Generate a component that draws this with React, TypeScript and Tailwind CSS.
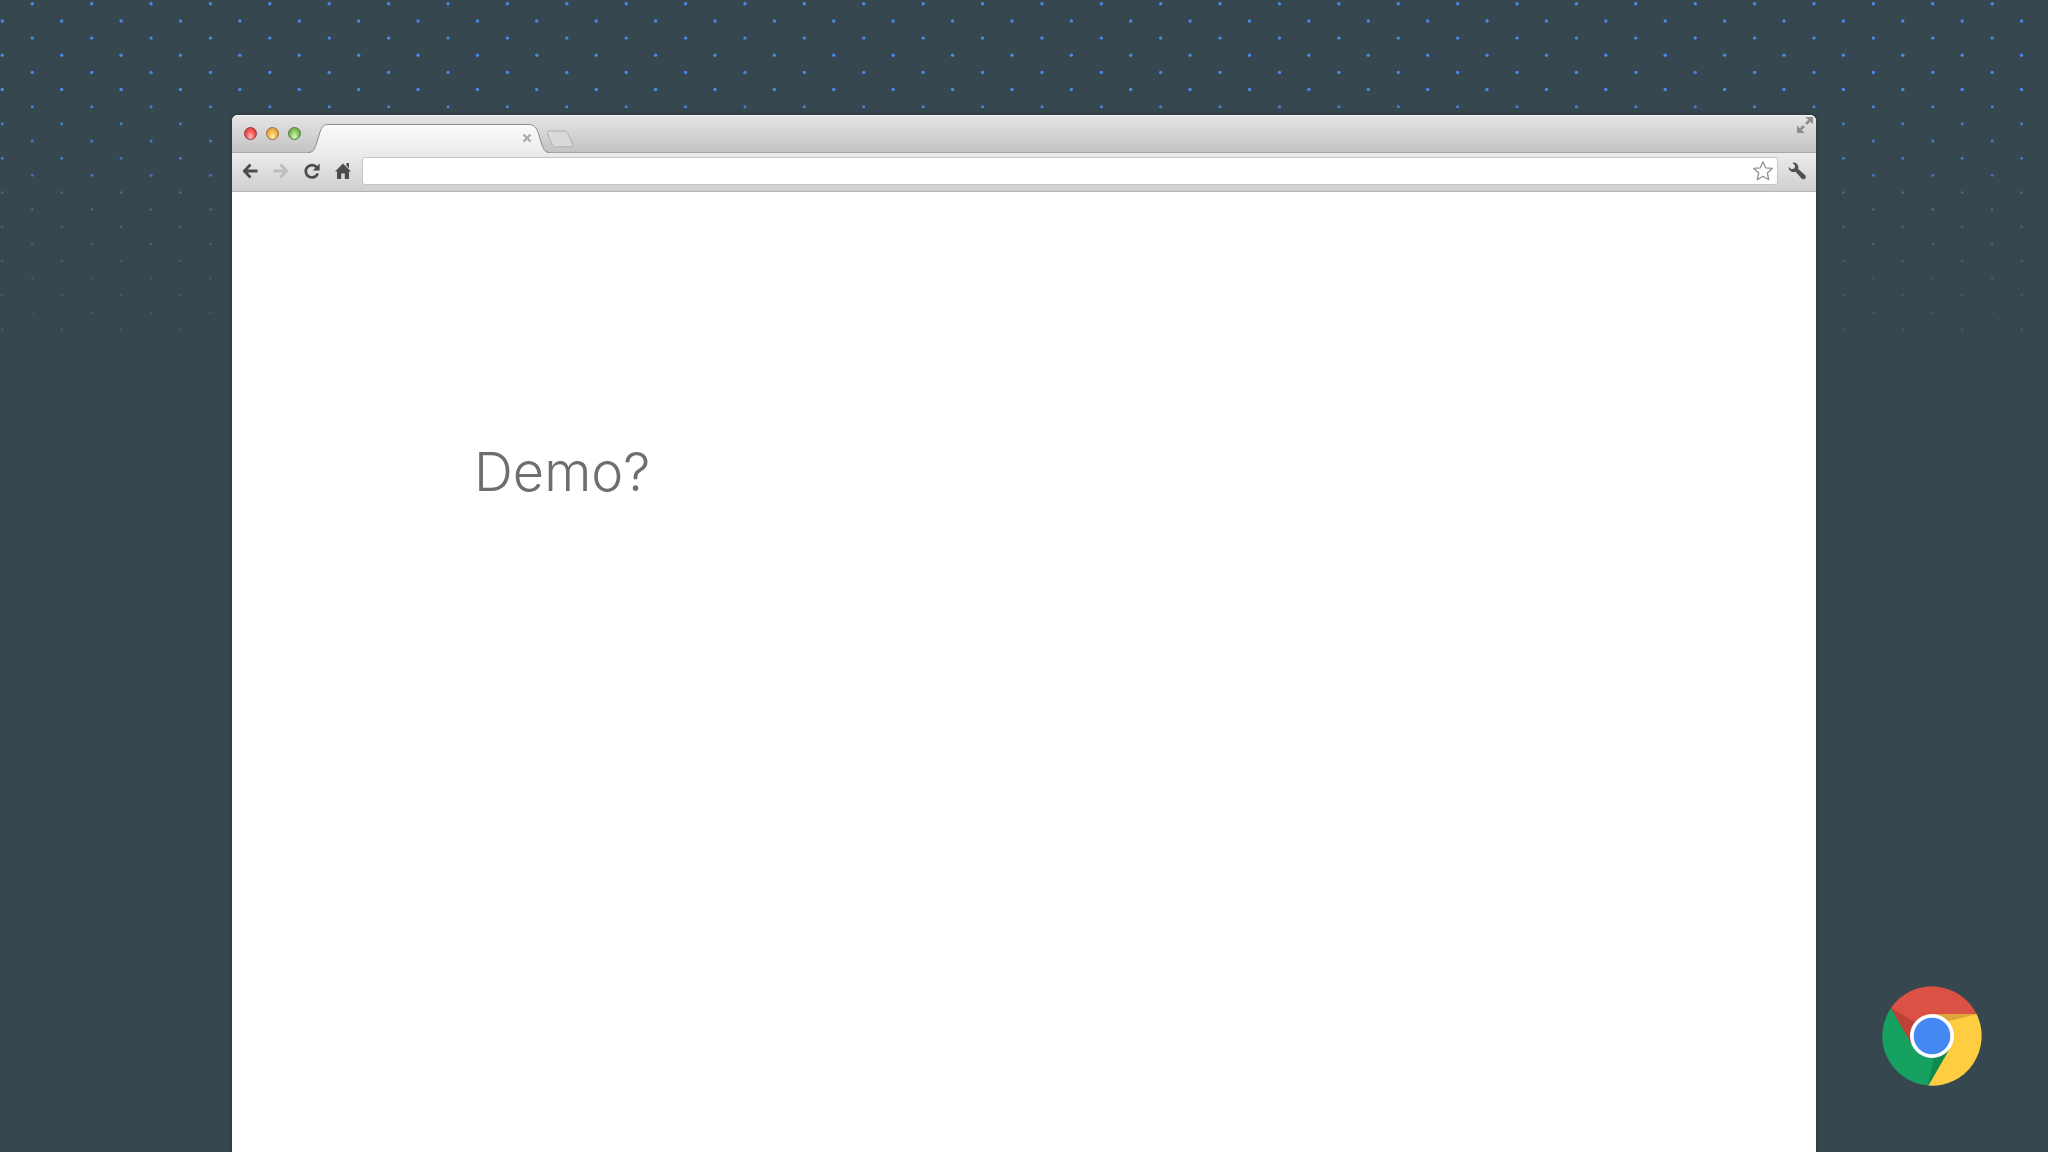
const ROWS = Array.from({ length: 20 }, (_, i) => i);
const COLUMNS = Array.from({ length: 35 }, (_, i) => i);

function rowOpacity(row: number) {
  if (row < 6) return 1;
  if (row < 11) return 1 - (row - 5) * 0.07;
  return Math.max(0.28, 0.6 - (row - 11) * 0.06);
}

function DotPattern() {
  return (
    <svg className="absolute inset-x-0 top-0 w-full" viewBox="0 0 2048 340" aria-hidden="true">
      {ROWS.map((row) => (
        <g key={row} fill={row < 11 ? '#4a88ea' : '#5c84a8'} opacity={rowOpacity(row)}>
          {COLUMNS.map((col) => (
            <circle
              key={col}
              cx={(row % 2 ? 2.3 : 32.3) + col * 59.39}
              cy={3.8 + row * 17.15}
              r={row < 6 ? 1.7 : row < 11 ? 1.5 : 1.3}
            />
          ))}
        </g>
      ))}
    </svg>
  );
}

function TrafficLights() {
  return (
    <div className="flex items-center gap-[9px]">
      <button
        aria-label="Close window"
        className="size-[13px] rounded-full border border-[#8f3438] bg-radial-[at_50%_80%] from-[#ffc4c0] via-[#f9595b] to-[#c52f35]"
      />
      <button
        aria-label="Minimize window"
        className="size-[13px] rounded-full border border-[#94703a] bg-radial-[at_50%_80%] from-[#fff0ac] via-[#f5b64b] to-[#c78a35]"
      />
      <button
        aria-label="Zoom window"
        className="size-[13px] rounded-full border border-[#4d7a39] bg-radial-[at_50%_80%] from-[#dcf7b8] via-[#8ac866] to-[#568c42]"
      />
    </div>
  );
}

function Tab() {
  return (
    <div className="relative h-[29px] w-[242px]">
      <svg className="absolute inset-0" width="242" height="29" viewBox="0 0 242 29" aria-hidden="true">
        <defs>
          <linearGradient id="tab" x1="0" y1="0" x2="0" y2="1">
            <stop offset="0" stopColor="#fbfbfb" />
            <stop offset="1" stopColor="#ebebeb" />
          </linearGradient>
        </defs>
        <path
          d="M0 29V28.500C5 28.500 6 26 8 21L12 8C14 2.500 16 .5 20 .5H221C225 .5 228 3 230 8L234 21C236 26 237 28.500 242 28.500V29Z"
          fill="url(#tab)"
        />
        <path
          d="M0 28.500C5 28.500 6 26 8 21L12 8C14 2.500 16 .5 20 .5H221C225 .5 228 3 230 8L234 21C236 26 237 28.500 242 28.500"
          fill="none"
          stroke="#8c8c8c"
        />
      </svg>
      <button aria-label="Close tab" className="absolute top-[9px] right-[18px] size-[10px]">
        <svg viewBox="0 0 10 10" stroke="#ababab" strokeWidth="2.400" aria-hidden="true">
          <path d="M1.500 1.500l7 7M8.500 1.500l-7 7" />
        </svg>
      </button>
    </div>
  );
}

function NewTabButton() {
  return (
    <button aria-label="New tab" className="-ml-1 mb-[5px] h-[18px] w-7">
      <svg viewBox="0 0 28 18" aria-hidden="true">
        <path
          d="M3 1H18C20 1 21.500 2 22.300 4L26.500 14.500C27 16 26.500 16.800 25 16.800H10C8 16.800 6.800 16 6 14L1.500 3.500C1 2 1.500 1 3 1Z"
          fill="#dadada"
          stroke="#adadad"
        />
      </svg>
    </button>
  );
}

function TitleBar() {
  return (
    <div className="flex h-[38px] items-end justify-between rounded-t-md border-b border-[#a6a6a6] bg-linear-to-b from-[#e6e6e6] to-[#c3c3c3] pl-3 shadow-[inset_0_1px_0_#f2f2f2]">
      <div className="-mb-px flex items-end">
        <div className="mr-[7px] flex h-[38px] items-center pb-0.5">
          <TrafficLights />
        </div>
        <Tab />
        <NewTabButton />
      </div>
      <button aria-label="Full screen" className="mt-[2px] mr-[3px] size-4 self-start">
        <svg viewBox="0 0 16 16" fill="#8e8e8e" stroke="#8e8e8e" aria-hidden="true">
          <path d="M8.500 0H16V7.500Z" stroke="none" />
          <path d="M0 8.500V16H7.500Z" stroke="none" />
          <path d="M13.500 2.500L9 7M2.500 13.500L7 9" strokeWidth="2.800" />
        </svg>
      </button>
    </div>
  );
}

function Toolbar() {
  return (
    <div className="flex h-[39px] items-center border-b border-[#b4b4b4] bg-linear-to-b from-[#ececec] to-[#cfcfcf] px-[10px] pb-0.5">
      <div className="flex gap-[15px]">
        <button aria-label="Back" className="size-4">
          <svg viewBox="0 0 16 16" fill="none" stroke="#4c4c4c" strokeWidth="2.800" aria-hidden="true">
            <path d="M8.500 1.500L2.300 8l6.200 6.500M3 8h12.500" strokeLinejoin="round" />
          </svg>
        </button>
        <button aria-label="Forward" className="size-4">
          <svg viewBox="0 0 16 16" fill="none" stroke="#bdbdbd" strokeWidth="2.800" aria-hidden="true">
            <path d="M7.500 1.500L13.700 8l-6.200 6.500M13 8H.5" strokeLinejoin="round" />
          </svg>
        </button>
        <button aria-label="Reload" className="size-4">
          <svg viewBox="0 0 16 16" aria-hidden="true">
            <path
              d="M12.800 4.300A6.200 6.200 0 1 0 13.800 10.500"
              fill="none"
              stroke="#4c4c4c"
              strokeWidth="2.700"
            />
            <path d="M15.600 .6V7.400H8.800Z" fill="#4c4c4c" />
          </svg>
        </button>
        <button aria-label="Home" className="size-4">
          <svg viewBox="0 0 16 16" fill="#4c4c4c" aria-hidden="true">
            <path d="M8 .6L16 8.600H14V16H9.800V10.500H6.200V16H2V8.600H0Z" />
            <path d="M11.500 0H14V5.200L11.500 2.800Z" />
          </svg>
        </button>
      </div>
      <div className="relative ml-[11px] flex-1">
        <input
          type="text"
          aria-label="Address"
          className="block h-[28px] w-full rounded-[3px] border border-[#c6c6c6] bg-white pr-8 pl-2 text-sm outline-none"
        />
        <button aria-label="Bookmark" className="absolute top-1 right-[5px] size-5">
          <svg viewBox="0 0 20 20" fill="#fff" stroke="#929292" strokeWidth="1.300" strokeLinejoin="round" aria-hidden="true">
            <path d="M10 .8L12.600 6.800L19.200 7.400L14.300 11.900L15.700 18.700L10 15.300L4.300 18.700L5.700 11.900L.8 7.400L7.400 6.800Z" />
          </svg>
        </button>
      </div>
      <button aria-label="Settings" className="ml-[10px] size-[18px]">
        <svg viewBox="0 0 18 18" fill="#505050" aria-hidden="true">
          <path d="M4.500 .7C7 .2 10 1.800 10.300 4.800C10.400 5.800 10.300 6.300 10.200 6.900L17.200 13.300C19 15.600 16.300 18.400 14 16.900L7.600 9.800C4.200 10.900 .6 8.700 .6 4.900L3.500 7.300L6.500 6.600L7.200 3.700Z" />
        </svg>
      </button>
    </div>
  );
}

function ChromeLogo() {
  return (
    <svg className="size-[100px]" viewBox="-150 -150 300 300" role="img" aria-label="Chrome">
      <path d="M0 0L-123 -84A149 149 0 0 1 134 -65L56 32Z" fill="#db5144" />
      <path d="M0 -65H134A149 149 0 0 1 -11 148.600L0 0Z" fill="#ffcd42" />
      <path d="M-123 -84A149 149 0 0 0 -11 148.600L56 32H-56Z" fill="#16a160" />
      <path d="M0 -65L-123 -84L-56 32Z" fill="#db5144" />
      <path d="M-123 -84L-40 -35L-56 32Z" fill="#bd4137" />
      <path d="M0 -65H134L30 -40Z" fill="#dca63a" />
      <path d="M56 32L-11 148.600L8 50Z" fill="#108850" />
      <circle r="66" fill="#fff" />
      <circle r="55" fill="#4688f1" />
    </svg>
  );
}

export default function App() {
  return (
    <div className="relative min-h-screen overflow-hidden bg-[#37474f]">
      <DotPattern />
      <div className="relative grid min-h-screen grid-cols-[232px_1fr_232px] pt-[115px]">
        <main className="col-start-2 flex flex-col rounded-t-md bg-white shadow-[0_0_4px_rgba(0,0,0,0.35)]">
          <TitleBar />
          <Toolbar />
          <div className="flex-1 px-[242px] pt-[244px]">
            <h1 className="font-['Inter','Liberation_Sans',sans-serif] text-[54px] leading-[72px] font-light text-[#6d6e71]">
              Demo?
            </h1>
          </div>
        </main>
        <aside className="flex items-end justify-end pr-[66px] pb-[66px]">
          <ChromeLogo />
        </aside>
      </div>
    </div>
  );
}
